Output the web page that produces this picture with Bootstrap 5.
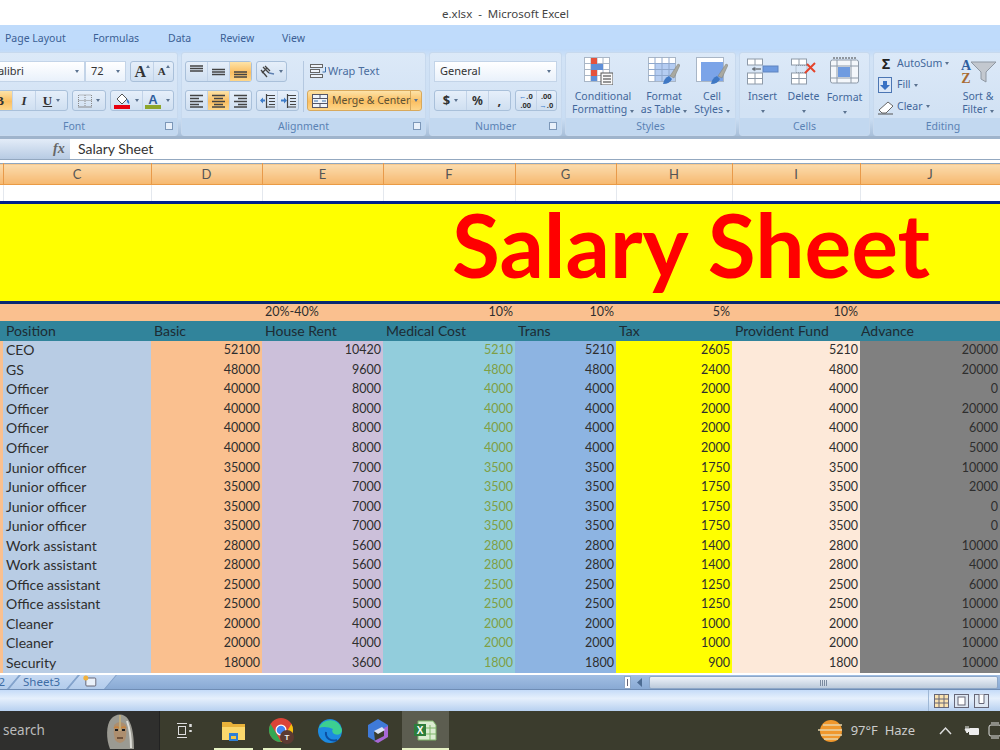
<!DOCTYPE html>
<html lang="en">
<head>
  <meta charset="UTF-8" />
  <meta name="viewport" content="width=device-width, initial-scale=1.0"/>
  <title>e.xlsx - Microsoft Excel</title>
  <link rel="stylesheet" href="https://cdn.jsdelivr.net/npm/bootstrap@5.3.0/dist/css/bootstrap.min.css" />
  <style>
    html, body { width: 1000px; height: 750px; overflow: hidden; background: #fff; }
    body { font-family: "Noto Sans", "Liberation Sans", sans-serif; font-size: 10.5px; color: #42679b; }
    svg { display: block; flex: none; }

    .title-bar { height: 25px; font-size: 11.5px; color: #444; padding-left: 442px; line-height: 27px; }
    .ribbon-tabs { height: 24px; background: #bfdbfb; font-size: 10.5px; color: #3b5f95; padding-left: 5px; line-height: 26px; }
    .ribbon-tabs li:nth-child(1) { width: 88px; }
    .ribbon-tabs li:nth-child(2) { width: 75px; }
    .ribbon-tabs li:nth-child(3) { width: 52px; }
    .ribbon-tabs li:nth-child(4) { width: 62px; }
    .ribbon { height: 90px; gap: 3px; padding-top: 3px; background: linear-gradient(#bed9f9, #d2e3f6 10%, #c9ddf3 80%, #a8bfd9); overflow: hidden; border-bottom: 3px solid #9fb4cc; }
    .rgroup { height: 84px; border: 1px solid #c7d9ee; border-radius: 3px; background: linear-gradient(#dce9f8, #d2e2f4 70%); flex: none; }
    .rgroup-body { height: 65px; }
    .rgroup-label { height: 17px; background: #c2d8f0; line-height: 17px; text-align: center; position: relative; font-size: 10.5px; color: #5a82b4; }
    .launcher { position: absolute; right: 4px; top: 4px; width: 8px; height: 8px; border: 1px solid #7c97b8; background: #e8f0fa; }
    .grp-font { width: 208px; margin-left: -30px; }
    .grp-align { width: 245px; }
    .grp-number { width: 133px; }
    .grp-styles { width: 171px; }
    .grp-cells { width: 131px; }
    .grp-edit { width: 140px; }

    .tool-row { height: 21px; }
    .tool-set { height: 21px; border: 1px solid #a9c0da; border-radius: 3px; background: linear-gradient(#e6effa, #cfdff1); color: #333; }
    .tool-set > span { height: 100%; display: flex; align-items: center; justify-content: center; border-right: 1px solid #c2d3e8; }
    .tool-set > span:last-child { border-right: 0; }
    .tool-set > .on { background: linear-gradient(#fde3a8, #fbbf62 55%, #fdd68a); }
    .serif-glyph { font-family: "Liberation Serif", serif; font-weight: 700; font-size: 13px; }
    .drop { width: 0; height: 0; border: 2.5px solid transparent; border-top: 3px solid #5b7390; border-bottom: 0; display: inline-block; flex: none; }
    .drop-up { transform: rotate(180deg); align-self: flex-start; margin-top: 3px; }
    .combo { height: 21px; background: linear-gradient(#fff, #e9f1fb); border: 1px solid #c3d4e8; color: #333; font-size: 11px; padding: 0 5px; }
    .merge-btn { width: 115px; background: linear-gradient(#fde3a8, #fbbf62 55%, #fdd68a); border-color: #d8a95c; }
    .merge-btn > span { border-color: #d8a95c; color: #5b5236; white-space: nowrap; }
    .rule-v { width: 1px; height: 51px; background: #b4c8e0; margin: 0 3px 0 4px; flex: none; }
    .dec-set { width: 44px; font-size: 7.5px; line-height: 9px; font-weight: 700; }
    .big-btn { text-align: center; line-height: 13px; color: #42679b; }
    .big-btn svg { margin: 0 auto 5px; }
    .side-item { height: 21.5px; gap: 3px; }

    .formula-bar { height: 21px; background: #fff; border-bottom: 1px solid #93a8c0; }
    .name-end { width: 70px; background: linear-gradient(#e3ecf8, #b7cbe3); font-style: italic; font-family: "Liberation Serif", serif; font-weight: 700; font-size: 14px; color: #666; padding-left: 53px; line-height: 19px; }
    .formula-text { font-family: Lato, sans-serif; font-size: 14px; color: #333; padding-left: 8px; line-height: 20px; }

    .sheet-wrap { height: 515px; padding-top: 3px; overflow: hidden; }
    .sheet { table-layout: fixed; border-collapse: collapse; width: 1000px; font-family: Lato, sans-serif; font-size: 14px; color: #2e2e2e; }
    .sheet td, .sheet th { padding: 0 3px; white-space: nowrap; font-weight: 400; overflow: visible; line-height: 16px; }
    .c-b { width: 3px; }
    .c-c { width: 148px; background: #b8cce4; }
    .c-d { width: 111px; background: #fac08f; }
    .c-e { width: 121px; background: #ccc0da; }
    .c-f { width: 132px; background: #92cddc; }
    .c-g { width: 101px; background: #8db4e2; }
    .c-h { width: 116px; background: #ffff00; }
    .c-i { width: 128px; background: #fde9d9; }
    .c-j { width: 140px; background: #808080; }
    .sheet-data td { height: 19.56px; text-align: right; padding-right: 2px; font-size: 12.5px; }
    .sheet-data td:first-child { padding: 0; background: #fac08f; }
    .sheet-data td:nth-child(2) { text-align: left; padding-left: 3px; font-size: 14px; }
    .sheet-data td:nth-child(5) { color: #7f9f45; }
    .col-letters th { height: 21px; text-align: center; color: #555; font-size: 13px; background: linear-gradient(#fbdcae, #f6b86f); border-right: 1px solid #e89a4a; border-bottom: 1px solid #ea9b45; border-top: 1px solid #8ea6bf; }
    .blank-row td { height: 18px; background: #fff; border-right: 1px solid #e4e8ee; }
    .title-row td { height: 100px; background: #ff0; border-top: 3px solid #00208c; border-bottom: 3px solid #0a2a70; padding: 0 0 16px 452px; overflow: hidden; }
    .salary-title { font-family: Lato, sans-serif; font-size: 87.5px; font-weight: 700; color: #f00; line-height: 76px; display: block; }
    .rate-row td { height: 18px; background: #fac08f; text-align: right; padding-right: 2px; font-size: 12.5px; }
    .rate-row td.rent-rate { text-align: left; padding-left: 3px; }
    .head-row td { height: 20px; background: #31849b; color: #1d2b33; }
    .head-row td:last-child { padding-left: 1px; }

    .tab-strip { height: 15px; background: linear-gradient(#a2bfe3, #89aad4); border-bottom: 1px solid #6f8db5; position: relative; }
    .sheet-tab { transform: skewX(-40deg); background: linear-gradient(#c6d9f2, #b3cceb); border-right: 1px solid #7f9fc8; border-left: 1px solid #7f9fc8; height: 14px; line-height: 14px; padding: 0 8px; flex: none; }
    .sheet-tab > span { display: block; transform: skewX(40deg); color: #3e6da5; font-size: 11.5px; }
    .scroll-track { position: absolute; left: 649px; right: 2px; top: 1px; height: 13px; border: 1px solid #8da7c8; border-radius: 2px; background: linear-gradient(#eef3f9, #bccadb); }
    .scroll-grip { position: absolute; left: 170px; top: 3px; width: 7px; height: 6px; background: repeating-linear-gradient(90deg, #7c8ba0 0 1px, transparent 1px 2px); }
    .status-bar { height: 21px; background: linear-gradient(#c5dbf8, #e6f0fc 40%, #b7d0f0); }
    .view-btns { margin-left: 928px; width: 62px; height: 21px; padding-left: 5px; border-left: 1px solid #9fb8d6; gap: 5px; }

    .taskbar { height: 39px; background: #3b3c2d; color: #ddd; }
    .task-search { width: 160px; height: 39px; background: #2f2f2d; font-size: 13.5px; padding-left: 3px; color: #bbb; border-right: 1px solid #222; }
    .task-slot { height: 39px; position: relative; }
    .task-slot.open::after { content: ""; position: absolute; left: 5px; right: 5px; bottom: 0; height: 2px; background: #e6f2c4; }
    .task-slot.active { background: #5c5d50; }
    .task-slot.active::after { left: 0; right: 0; }
    .weather-text { font-size: 13px; color: #ccc; }
  </style>
</head>
<body>
  <div class="title-bar">e.xlsx&nbsp; -&nbsp; Microsoft Excel</div>
  <ul class="nav ribbon-tabs">
    <li>Page Layout</li>
    <li>Formulas</li>
    <li>Data</li>
    <li>Review</li>
    <li>View</li>
  </ul>

  <div class="ribbon d-flex">
    <!-- Font -->
    <div class="rgroup grp-font d-flex flex-column">
      <div class="rgroup-body d-flex flex-column gap-2 pt-2">
        <div class="tool-row d-flex align-items-center">
          <div class="combo d-flex align-items-center justify-content-between" style="width:114px;padding-left:19px"><span>Calibri</span><i class="drop"></i></div>
          <div class="combo d-flex align-items-center justify-content-between" style="width:41px"><span>72</span><i class="drop"></i></div>
          <div class="tool-set d-flex ms-1" style="width:44px">
            <span class="flex-fill serif-glyph" style="font-size:16px">A<i class="drop drop-up"></i></span>
            <span class="flex-fill serif-glyph" style="font-size:11px">A<i class="drop drop-up"></i></span>
          </div>
        </div>
        <div class="tool-row d-flex align-items-center">
          <div class="tool-set d-flex" style="width:97px">
            <span class="on serif-glyph" style="width:42px;padding-left:15px">B</span>
            <span class="fst-italic serif-glyph" style="width:23px">I</span>
            <span class="gap-1 serif-glyph" style="width:32px"><u>U</u><i class="drop"></i></span>
          </div>
          <div class="tool-set d-flex ms-1" style="width:34px">
            <span class="w-100 gap-1"><svg width="14" height="14" viewBox="0 0 14 14" fill="none" stroke="#8a8a8a"><path stroke-dasharray="1 1" d="M.5 12V1h13v11M7 1v11M.5 6.500h13"/><path d="M0 13h14"/></svg><i class="drop"></i></span>
          </div>
          <div class="tool-set d-flex ms-1" style="width:64px">
            <span class="flex-fill gap-1"><svg width="17" height="17" viewBox="0 0 17 17"><path d="M3 7l5-5 5 5-5 5z" fill="#fff" stroke="#555"/><path d="M13 7q3 2 2 5-3-2-2-5" fill="#3d7cc9"/><rect y="13" width="16" height="4" fill="#e8000f"/></svg><i class="drop"></i></span>
            <span class="flex-fill gap-1"><svg width="17" height="17" viewBox="0 0 17 17"><text x="8" y="12" text-anchor="middle" font-family="Liberation Sans, sans-serif" font-weight="700" font-size="13" fill="#2f5e9e">A</text><rect y="13" width="16" height="4" fill="#8ea62a"/></svg><i class="drop"></i></span>
          </div>
        </div>
      </div>
      <div class="rgroup-label">Font<i class="launcher"></i></div>
    </div>

    <!-- Alignment -->
    <div class="rgroup grp-align d-flex flex-column">
      <div class="rgroup-body d-flex pt-2" style="padding-left:3px">
        <div class="d-flex flex-column gap-2" style="width:114px">
          <div class="tool-row d-flex">
            <div class="tool-set d-flex" style="width:67px">
              <span class="flex-fill"><svg width="15" height="15" viewBox="0 0 15 15" stroke="#444" stroke-width="1.300"><path d="M1 2h13M1 4.500h13M1 7h13"/></svg></span>
              <span class="flex-fill"><svg width="15" height="15" viewBox="0 0 15 15" stroke="#444" stroke-width="1.300"><path d="M1 5.500h13M1 8h13M1 10.500h13"/></svg></span>
              <span class="flex-fill on"><svg width="15" height="15" viewBox="0 0 15 15" stroke="#444" stroke-width="1.300"><path d="M1 8h13M1 10.500h13M1 13h13"/></svg></span>
            </div>
            <div class="tool-set d-flex ms-1" style="width:31px"><span class="w-100 gap-1"><svg width="15" height="14" viewBox="0 0 15 14" fill="none" stroke="#444" stroke-width="1.300"><path d="M3 2l6 6M5 1l5 5M1 5l6 7M2 8l5-5"/><path d="M9 8l5 1" stroke="#5d7fb0"/></svg><i class="drop"></i></span></div>
          </div>
          <div class="tool-row d-flex">
            <div class="tool-set d-flex" style="width:67px">
              <span class="flex-fill"><svg width="15" height="14" viewBox="0 0 15 14" stroke="#444" stroke-width="1.300"><path d="M1 1.500h13M1 4.500h9M1 7.500h13M1 10.500h9M1 13h13"/></svg></span>
              <span class="flex-fill on"><svg width="15" height="14" viewBox="0 0 15 14" stroke="#444" stroke-width="1.300"><path d="M1 1.500h13M3 4.500h9M1 7.500h13M3 10.500h9M1 13h13"/></svg></span>
              <span class="flex-fill"><svg width="15" height="14" viewBox="0 0 15 14" stroke="#444" stroke-width="1.300"><path d="M1 1.500h13M5 4.500h9M1 7.500h13M5 10.500h9M1 13h13"/></svg></span>
            </div>
            <div class="tool-set d-flex ms-1" style="width:43px">
              <span class="flex-fill"><svg width="15" height="14" viewBox="0 0 15 14" stroke="#444" stroke-width="1.200"><path d="M7 1.500h8M9 4.500h6M9 7.500h6M9 10.500h6M7 13h8M6.500 0v14"/><path d="M1 6.500h4" stroke="#3d7cc9" stroke-width="2"/><path d="M0 6.500l3-3v6z" fill="#3d7cc9" stroke="none"/></svg></span>
              <span class="flex-fill"><svg width="15" height="14" viewBox="0 0 15 14" stroke="#444" stroke-width="1.200"><path d="M7 1.500h8M9 4.500h6M9 7.500h6M9 10.500h6M7 13h8M6.500 0v14"/><path d="M0 6.500h3" stroke="#3d7cc9" stroke-width="2"/><path d="M6 6.500l-3-3v6z" fill="#3d7cc9" stroke="none"/></svg></span>
            </div>
          </div>
        </div>
        <div class="rule-v"></div>
        <div class="d-flex flex-column gap-2">
          <div class="tool-row d-flex align-items-center" style="padding-left:3px">
            <svg width="18" height="15" viewBox="0 0 18 15" fill="#eef3fa" stroke="#666"><rect x=".5" y=".5" width="12" height="3"/><rect x=".5" y="5.500" width="9" height="3"/><rect x=".5" y="10.500" width="12" height="3"/><path d="M15.500 3v5h-3" fill="none" stroke="#3b6ea8"/></svg>
            <span style="color:#4a6d9e;font-size:11px">Wrap Text</span>
          </div>
          <div class="tool-set merge-btn d-flex">
            <span class="flex-fill gap-1 justify-content-start ps-1"><svg width="16" height="14" viewBox="0 0 16 14" fill="#eef3fa" stroke="#556"><rect x=".5" y=".5" width="15" height="13"/><path d="M.5 4.500h15M.5 9.500h15M8 .5v4M8 9.500v4"/><path d="M2 7h4M14 7h-4" stroke="#3b6ea8"/></svg>Merge &amp; Center</span>
            <span style="width:10px;flex:none"><i class="drop"></i></span>
          </div>
        </div>
      </div>
      <div class="rgroup-label">Alignment<i class="launcher"></i></div>
    </div>

    <!-- Number -->
    <div class="rgroup grp-number d-flex flex-column">
      <div class="rgroup-body d-flex flex-column gap-2 pt-2 px-1">
        <div class="combo d-flex align-items-center justify-content-between" style="width:123px"><span>General</span><i class="drop"></i></div>
        <div class="tool-row d-flex">
          <div class="tool-set d-flex" style="width:77px">
            <span class="gap-1 fw-bold" style="width:33px;font-size:13px">$<i class="drop"></i></span>
            <span class="fw-bold" style="width:22px;font-size:12px">%</span>
            <span class="fw-bold" style="width:22px;font-size:13px">,</span>
          </div>
          <div class="tool-set dec-set d-flex ms-1">
            <span class="flex-fill text-center"><span><b style="color:#3d7cc9">←</b>.0<br>.00</span></span>
            <span class="flex-fill text-center"><span>.00<br><b style="color:#3d7cc9">→</b>.0</span></span>
          </div>
        </div>
      </div>
      <div class="rgroup-label">Number<i class="launcher"></i></div>
    </div>

    <!-- Styles -->
    <div class="rgroup grp-styles d-flex flex-column">
      <div class="rgroup-body d-flex pt-1" style="padding-left:3px">
        <div class="big-btn" style="width:68px">
          <svg width="29" height="28" viewBox="0 0 29 28" stroke="#a9b6c6" fill="#fff" style="margin-left:15px"><rect x=".5" y=".5" width="25" height="24"/><path d="M.5 6.500h25M.5 12.500h25M.5 18.500h25M7 .5v24M13 .5v24M19 .5v24" fill="none"/><rect x="7" y="1" width="6" height="6" fill="#e5523c" stroke="none"/><rect x="7" y="7" width="12" height="6" fill="#5f8fd8" stroke="none"/><rect x="7" y="13" width="6" height="6" fill="#e5523c" stroke="none"/><rect x="7" y="19" width="6" height="5" fill="#5f8fd8" stroke="none"/><rect x="17" y="16" width="12" height="12" fill="#fafafa" stroke="#555"/><path d="M19 19h8M19 22h8M19 25h8" stroke="#333"/></svg>
          Conditional<br>Formatting <i class="drop"></i>
        </div>
        <div class="big-btn" style="width:54px">
          <svg width="32" height="28" viewBox="0 0 32 28" stroke="#a9b6c6" fill="#fff"><rect x=".5" y=".5" width="27" height="24"/><rect x="7" y="7" width="20" height="17" fill="#b5cdf2" stroke="none"/><path d="M.5 6.500h27M.5 12.500h27M.5 18.500h27M7 .5v24M14 .5v24M21 .5v24" fill="none" stroke="#8fa8cd"/><path d="M15 27q1-6 6-8l3 3q-2 5-9 5z" fill="#3f78c4" stroke="none"/><path d="M22 19l8-12 2 1-6 13z" fill="#a9a9a0" stroke="#7f7f76" stroke-width=".5"/></svg>
          Format<br>as Table <i class="drop"></i>
        </div>
        <div class="big-btn" style="width:42px">
          <svg width="32" height="28" viewBox="0 0 32 28"><rect x=".5" y=".5" width="27" height="24" fill="#fff" stroke="#a9b6c6"/><rect x="5" y="5" width="22" height="19" fill="#7ba4e8"/><path d="M15 27q1-6 6-8l3 3q-2 5-9 5z" fill="#3f78c4"/><path d="M22 19l8-12 2 1-6 13z" fill="#a9a9a0" stroke="#7f7f76" stroke-width=".5"/></svg>
          Cell<br>Styles <i class="drop"></i>
        </div>
      </div>
      <div class="rgroup-label">Styles</div>
    </div>

    <!-- Cells -->
    <div class="rgroup grp-cells d-flex flex-column">
      <div class="rgroup-body d-flex pt-1" style="padding-left:2px">
        <div class="big-btn" style="width:41px">
          <svg width="32" height="28" viewBox="0 0 32 28" fill="#fff" stroke="#8e9aa8"><rect x=".5" y="2" width="15" height="6"/><path d="M8 2v6"/><rect x=".5" y="16" width="15" height="11"/><path d="M.5 21.500h15M8 16v11"/><rect x="16" y="9" width="15" height="6" fill="#6f9be0" stroke="#5f84c0"/><path d="M14 12H5" stroke="#444"/><path d="M5 12l3-2v4z" fill="#444"/></svg>
          Insert<br><i class="drop"></i>
        </div>
        <div class="big-btn" style="width:41px">
          <svg width="26" height="28" viewBox="0 0 26 28" fill="#fff" stroke="#8e9aa8"><rect x=".5" y="2" width="15" height="6"/><path d="M8 2v6"/><rect x=".5" y="16" width="15" height="11"/><path d="M.5 21.500h15M8 16v11"/><rect x="5" y="8.500" width="11" height="7" fill="none" stroke-dasharray="1 1"/><path d="M16 7l8 8M24 6L14 16" stroke="#e4432b" stroke-width="2"/></svg>
          Delete<br><i class="drop"></i>
        </div>
        <div class="big-btn" style="width:41px">
          <svg width="30" height="29" viewBox="0 0 30 29" fill="#f4f7fb" stroke="#8e9aa8"><rect x=".5" y="3" width="28" height="23" rx="2"/><path d="M7 3v23M21 3v23M.5 9h28M.5 21h28" fill="none"/><rect x="8" y="10" width="12" height="10" fill="#6f9be0" stroke="none"/><path d="M3 1h24" stroke="#444" stroke-dasharray="2 1"/></svg>
          Format<br><i class="drop"></i>
        </div>
      </div>
      <div class="rgroup-label">Cells</div>
    </div>

    <!-- Editing -->
    <div class="rgroup grp-edit d-flex flex-column">
      <div class="rgroup-body d-flex ps-1">
        <div style="width:79px">
          <div class="side-item d-flex align-items-center"><b class="text-center" style="width:16px;font-size:14px;color:#222">Σ</b><span>AutoSum</span><i class="drop"></i></div>
          <div class="side-item d-flex align-items-center"><svg width="16" height="16" viewBox="0 0 16 16"><rect x=".5" y=".5" width="13" height="15" fill="#dbe7f7" stroke="#4c76b3"/><path d="M5 4h4v4h3l-5 5-5-5h3z" fill="#3a72c4"/></svg><span>Fill</span><i class="drop"></i></div>
          <div class="side-item d-flex align-items-center"><svg width="16" height="16" viewBox="0 0 16 16"><path d="M1 11L10 3l5 4-7 7H4z" fill="#fff" stroke="#666"/><path d="M0 15h15" stroke="#555"/></svg><span>Clear</span><i class="drop"></i></div>
        </div>
        <div class="big-btn" style="width:42px;margin-top:4px">
          <svg width="38" height="28" viewBox="0 0 38 28"><path d="M12 5h25l-10 10v10l-5-3v-7z" fill="#c3c8cf" stroke="#8f98a3"/><text x="7" y="13" text-anchor="middle" font-family="Liberation Serif, serif" font-weight="700" font-size="14" fill="#2f5e9e">A</text><text x="7" y="26" text-anchor="middle" font-family="Liberation Serif, serif" font-weight="700" font-size="14" fill="#a86a32">Z</text></svg>
          Sort &amp;<br>Filter <i class="drop"></i>
        </div>
      </div>
      <div class="rgroup-label">Editing</div>
    </div>
  </div>

  <div class="formula-bar d-flex">
    <div class="name-end">fx</div>
    <div class="formula-text">Salary Sheet</div>
  </div>

  <div class="sheet-wrap">
    <table class="sheet">
      <colgroup>
        <col class="c-b"><col class="c-c"><col class="c-d"><col class="c-e"><col class="c-f"><col class="c-g"><col class="c-h"><col class="c-i"><col class="c-j">
      </colgroup>
      <tbody>
        <tr class="col-letters"><th></th><th>C</th><th>D</th><th>E</th><th>F</th><th>G</th><th>H</th><th>I</th><th>J</th></tr>
        <tr class="blank-row"><td></td><td></td><td></td><td></td><td></td><td></td><td></td><td></td><td></td></tr>
        <tr class="title-row"><td colspan="9"><span class="salary-title">Salary Sheet</span></td></tr>
        <tr class="rate-row"><td></td><td></td><td></td><td class="rent-rate">20%-40%</td><td>10%</td><td>10%</td><td>5%</td><td>10%</td><td></td></tr>
        <tr class="head-row"><td></td><td>Position</td><td>Basic</td><td>House Rent</td><td>Medical Cost</td><td>Trans</td><td>Tax</td><td>Provident Fund</td><td>Advance</td></tr>
      </tbody>
      <tbody class="sheet-data">
        <tr><td></td><td>CEO</td><td>52100</td><td>10420</td><td>5210</td><td>5210</td><td>2605</td><td>5210</td><td>20000</td></tr>
        <tr><td></td><td>GS</td><td>48000</td><td>9600</td><td>4800</td><td>4800</td><td>2400</td><td>4800</td><td>20000</td></tr>
        <tr><td></td><td>Officer</td><td>40000</td><td>8000</td><td>4000</td><td>4000</td><td>2000</td><td>4000</td><td>0</td></tr>
        <tr><td></td><td>Officer</td><td>40000</td><td>8000</td><td>4000</td><td>4000</td><td>2000</td><td>4000</td><td>20000</td></tr>
        <tr><td></td><td>Officer</td><td>40000</td><td>8000</td><td>4000</td><td>4000</td><td>2000</td><td>4000</td><td>6000</td></tr>
        <tr><td></td><td>Officer</td><td>40000</td><td>8000</td><td>4000</td><td>4000</td><td>2000</td><td>4000</td><td>5000</td></tr>
        <tr><td></td><td>Junior officer</td><td>35000</td><td>7000</td><td>3500</td><td>3500</td><td>1750</td><td>3500</td><td>10000</td></tr>
        <tr><td></td><td>Junior officer</td><td>35000</td><td>7000</td><td>3500</td><td>3500</td><td>1750</td><td>3500</td><td>2000</td></tr>
        <tr><td></td><td>Junior officer</td><td>35000</td><td>7000</td><td>3500</td><td>3500</td><td>1750</td><td>3500</td><td>0</td></tr>
        <tr><td></td><td>Junior officer</td><td>35000</td><td>7000</td><td>3500</td><td>3500</td><td>1750</td><td>3500</td><td>0</td></tr>
        <tr><td></td><td>Work assistant</td><td>28000</td><td>5600</td><td>2800</td><td>2800</td><td>1400</td><td>2800</td><td>10000</td></tr>
        <tr><td></td><td>Work assistant</td><td>28000</td><td>5600</td><td>2800</td><td>2800</td><td>1400</td><td>2800</td><td>4000</td></tr>
        <tr><td></td><td>Office assistant</td><td>25000</td><td>5000</td><td>2500</td><td>2500</td><td>1250</td><td>2500</td><td>6000</td></tr>
        <tr><td></td><td>Office assistant</td><td>25000</td><td>5000</td><td>2500</td><td>2500</td><td>1250</td><td>2500</td><td>10000</td></tr>
        <tr><td></td><td>Cleaner</td><td>20000</td><td>4000</td><td>2000</td><td>2000</td><td>1000</td><td>2000</td><td>10000</td></tr>
        <tr><td></td><td>Cleaner</td><td>20000</td><td>4000</td><td>2000</td><td>2000</td><td>1000</td><td>2000</td><td>10000</td></tr>
        <tr><td></td><td>Security</td><td>18000</td><td>3600</td><td>1800</td><td>1800</td><td>900</td><td>1800</td><td>10000</td></tr>
      </tbody>
    </table>
  </div>

  <div class="tab-strip d-flex">
    <div class="sheet-tab" style="margin-left:-36px;width:50px"><span class="text-end">2</span></div>
    <div class="sheet-tab" style="width:59px"><span>Sheet3</span></div>
    <div class="sheet-tab" style="width:38px"><span><svg width="14" height="12" viewBox="0 0 14 12"><rect x="3" y="3" width="10" height="8" rx="1" fill="#eaf1fa" stroke="#667"/><circle cx="3" cy="3" r="2.500" fill="#f1b13c"/></svg></span></div>
    <svg class="position-absolute" style="left:624px;top:1px" width="26" height="13" viewBox="0 0 26 13"><rect x=".5" y=".5" width="6" height="12" fill="#fff" stroke="#8da7c8"/><path d="M3.500 3v7" stroke="#667"/><path d="M18 2v9l-5-4.500z" fill="#4d6c93"/></svg>
    <div class="scroll-track"><i class="scroll-grip"></i></div>
  </div>

  <div class="status-bar">
    <div class="view-btns d-flex align-items-center">
      <svg width="15" height="14" viewBox="0 0 15 14" fill="#fbe3b0" stroke="#667"><rect x=".5" y=".5" width="14" height="13"/><path d="M.5 5h14M.5 9h14M5 .5v13M10 .5v13" fill="none"/></svg>
      <svg width="15" height="14" viewBox="0 0 15 14" fill="#dfe8f3" stroke="#667"><rect x=".5" y=".5" width="14" height="13"/><rect x="4" y="3" width="7" height="8" fill="#fff"/></svg>
      <svg width="15" height="14" viewBox="0 0 15 14" fill="#dfe8f3" stroke="#667"><rect x=".5" y=".5" width="14" height="13"/><path d="M5 .5v9h5v-9" fill="#fff"/></svg>
    </div>
  </div>

  <div class="taskbar d-flex">
    <div class="task-search d-flex align-items-center justify-content-between">
      <span>search</span>
      <svg style="margin-right:24px" width="30" height="36" viewBox="0 0 30 36"><path d="M5 36C1 26 1 12 6 6c5-6 13-6 17 0 5 7 6 20 6 30z" fill="#9b9a92"/><path d="M22 8c3 8 4 18 4 27" fill="none" stroke="#dcdcd6" stroke-width="2"/><path d="M9 12q6-6 12 0 1 10-1 15-5 6-10 0-2-7-1-15z" fill="#ad8e6e"/><path d="M9 15q3-2 5 0M16 15q3-2 5 0" fill="none" stroke="#c9843c" stroke-width="1.500"/><path d="M10 17h3M17 17h3" stroke="#1c1c1c" stroke-width="2"/><path d="M15 2v16" stroke="#c9b27a" stroke-width="1.500"/><path d="M12 25h6" stroke="#5a3d2b" stroke-width="1.500"/></svg>
    </div>
    <div class="task-slot d-flex align-items-center justify-content-center" style="width:49px"><svg width="17" height="17" viewBox="0 0 17 17" fill="none" stroke="#ddd"><path d="M1 1.500h10M1 15.500h10"/><rect x="2.500" y="4.500" width="7" height="8"/><path d="M14.500 2v3M14.500 8v2" stroke-width="2.500"/></svg></div>
    <div class="task-slot open d-flex align-items-center justify-content-center" style="width:49px"><svg width="23" height="20" viewBox="0 0 23 20"><path d="M0 1h9l2 2h12v16H0z" fill="#e9b23a"/><rect y="6" width="23" height="13" fill="#fbd86c"/><rect x="7" y="12" width="9" height="8" fill="#2f7fd6"/><rect x="9" y="15" width="5" height="3" fill="#f6c844"/></svg></div>
    <div class="task-slot open d-flex align-items-center justify-content-center" style="width:48px"><svg width="26" height="26" viewBox="0 0 26 26"><circle cx="12" cy="12" r="12" fill="#db4437"/><path d="M12 24A12 12 0 0 1 1.600 6L7 15z" fill="#34a853"/><path d="M22.400 6A12 12 0 0 1 12 24l5-9z" fill="#f4c20d"/><circle cx="12" cy="12" r="5.500" fill="#fff"/><circle cx="12" cy="12" r="4.300" fill="#4285f4"/><circle cx="18" cy="19" r="7" fill="#5c3a32"/><text x="18" y="22" text-anchor="middle" font-size="8" font-weight="700" fill="#eee" font-family="Liberation Sans, sans-serif">T</text></svg></div>
    <div class="task-slot d-flex align-items-center justify-content-center" style="width:48px"><svg width="24" height="24" viewBox="0 0 24 24"><circle cx="12" cy="12" r="12" fill="#1d8ae0"/><path d="M1 9C4 0 20-3 24 11c0 5-6 6-9 3-1-2-1-3 0-4-4-2-10-3-14-1z" fill="#3ccf91"/><path d="M8 13c-1 6 5 10 11 8" fill="none" stroke="#0b4fa3" stroke-width="2"/></svg></div>
    <div class="task-slot d-flex align-items-center justify-content-center" style="width:48px"><svg width="21" height="24" viewBox="0 0 21 24"><path d="M10 0l10 6v6l-6-3-8 4 1 9-7-4V6z" fill="#3f7ad8"/><path d="M20 7v11l-10 6-4-2 10-5V9z" fill="#a767d6"/><path d="M6 12l8-4 3 3-7 4z" fill="#dbe3f5"/></svg></div>
    <div class="task-slot open active d-flex align-items-center justify-content-center" style="width:47px"><svg width="23" height="21" viewBox="0 0 23 21"><path d="M4 1h15l3 4v15H4z" fill="#dcecd2" stroke="#7fb56a"/><path d="M11 8h11M11 14h11M16 5v15" stroke="#7fb56a"/><rect y="4" width="12" height="12" fill="#2e7d3c"/><text x="6" y="14" text-anchor="middle" font-size="10" font-weight="700" fill="#fff" font-family="Liberation Sans, sans-serif">X</text></svg></div>
    <div class="ms-auto d-flex align-items-center gap-2 weather-text">
      <svg width="25" height="24" viewBox="0 0 25 24"><circle cx="13" cy="12" r="11" fill="#f0982d"/><path d="M5 6h19M0 11h24M3 16h21M6 20h14" stroke="#e8d4a8" stroke-width="1.500"/></svg>
      <span>97°F&nbsp; Haze</span>
      <svg class="ms-3" width="13" height="9" viewBox="0 0 13 9" fill="none" stroke="#ddd" stroke-width="1.500"><path d="M1 8l5.500-6L12 8"/></svg>
      <svg class="ms-1" width="16" height="12" viewBox="0 0 16 12"><path d="M2 1v3M4 1v3M1 4h4v2l-2 2z" stroke="#eee" fill="#eee"/><rect x="5" y="3" width="10" height="7" rx="1" fill="#eee"/></svg>
      <svg width="12" height="17" viewBox="0 0 12 17" fill="none" stroke="#ddd"><rect x="1" y="3" width="12" height="11" rx="2"/><path d="M3 1h8M3 16h8"/></svg>
    </div>
  </div>
</body>
</html>
